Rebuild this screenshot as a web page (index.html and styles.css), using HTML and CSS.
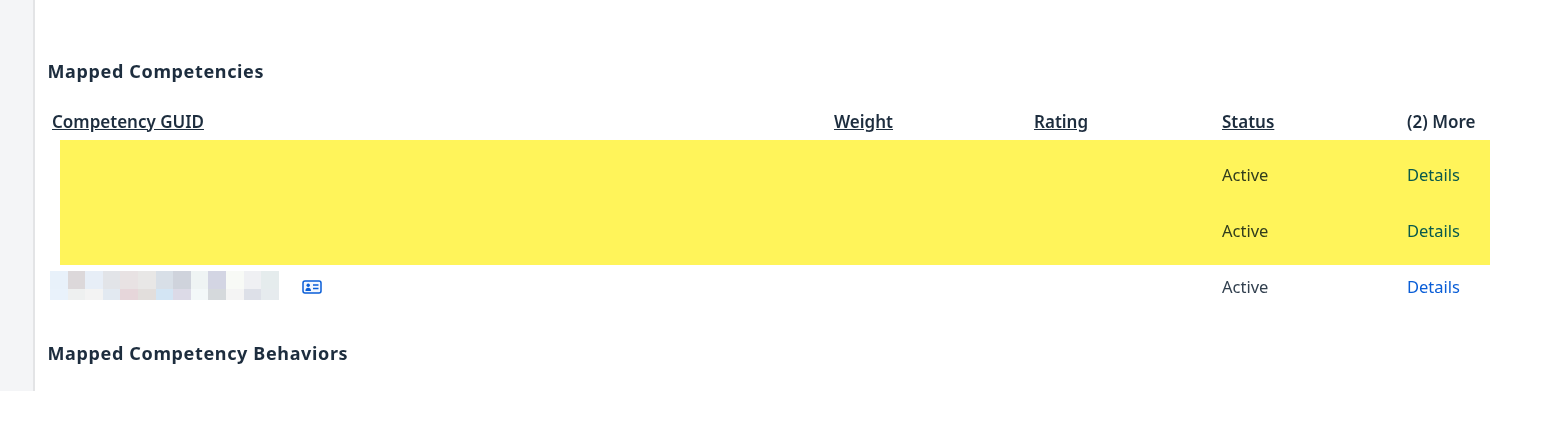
FILE: index.html
```html
<!DOCTYPE html>
<html lang="en">
<head>
    <meta charset="UTF-8">
    <title>Mapped Competencies</title>
    <link rel="stylesheet" href="styles.css">
</head>
<body>
    <div class="page">
        <aside class="sidebar"></aside>
        <main class="content">
            <h2 class="section-title first">Mapped Competencies</h2>
            <div class="table">
                <div class="row head">
                    <span class="sort">Competency GUID</span>
                    <span class="sort">Weight</span>
                    <span class="sort">Rating</span>
                    <span class="sort">Status</span>
                    <span>(2) More</span>
                </div>
                <div class="row tall">
                    <span></span><span></span><span></span>
                    <span>Active</span>
                    <a class="link">Details</a>
                </div>
                <div class="row tall">
                    <span></span><span></span><span></span>
                    <span>Active</span>
                    <a class="link">Details</a>
                </div>
                <div class="row last">
                    <div class="guid">
                        <div class="blur">
                            <i style="background:#e8f1fa"></i><i style="background:#dcd8da"></i><i style="background:#e7eef7"></i><i style="background:#e2e4e8"></i><i style="background:#e8e2e3"></i><i style="background:#e8e7e6"></i><i style="background:#d8dfe7"></i><i style="background:#cfd3dc"></i><i style="background:#eff4f4"></i><i style="background:#d3d5e3"></i><i style="background:#f8faf6"></i><i style="background:#eff0f3"></i><i style="background:#e5eced"></i>
                            <i style="background:#e9f2fb"></i><i style="background:#eef0f0"></i><i style="background:#f3f3f3"></i><i style="background:#e2e9f1"></i><i style="background:#e6d6da"></i><i style="background:#e2dedc"></i><i style="background:#d3e5f4"></i><i style="background:#dcdae7"></i><i style="background:#f3f8f9"></i><i style="background:#d5d9dc"></i><i style="background:#f4f4f4"></i><i style="background:#dde0e8"></i><i style="background:#e6ebee"></i>
                        </div>
                        <svg class="card-icon" width="20" height="14" viewBox="0 0 20 14">
                            <rect x="1" y="1" width="18" height="12" rx="2" fill="#f2f7fe" stroke="#0a5ed7" stroke-width="1.5"/>
                            <circle cx="6.200" cy="5.200" r="1.700" fill="#0a5ed7"/>
                            <path d="M3.400 11c0-2.200 1.200-3.200 2.800-3.200S9 8.800 9 11z" fill="#0a5ed7"/>
                            <path d="M11 5h5.500M11 8.500h5.500" stroke="#0a5ed7" stroke-width="1.500"/>
                        </svg>
                    </div>
                    <span></span><span></span>
                    <span>Active</span>
                    <a class="link">Details</a>
                </div>
                <div class="highlight"></div>
            </div>
            <h2 class="section-title second">Mapped Competency Behaviors</h2>
        </main>
    </div>
</body>
</html>
```

FILE: styles.css
```css
/* Page frame */
body {
    margin: 0;
    background-color: #fff;
    color: #32404f;
    font-family: "Noto Sans", Arial, sans-serif;
}

.page {
    display: flex;
    height: 391px;
}

.sidebar {
    width: 33px;
    flex-shrink: 0;
    background-color: #f4f5f7;
    border-right: 2px solid #e3e4e6;
}

.content {
    flex: 1;
    padding-left: 12.5px;
}

/* Headings */
.section-title {
    margin: 0;
    font-size: 18px;
    line-height: 24px;
    font-weight: 700;
    letter-spacing: 0.64px;
    color: #1d2d3e;
}

.section-title.first {
    padding-top: 59px;
}

.section-title.second {
    padding-top: 25px;
}

/* Table */
.table {
    position: relative;
    margin-top: 23px;
    padding-left: 4.5px;
    font-size: 16.5px;
}

.row {
    display: grid;
    grid-template-columns: 782px 200px 188px 185px 100px;
    align-items: center;
    box-sizing: border-box;
}

.head {
    height: 41px;
    padding-bottom: 11px;
    font-size: 17px;
    font-weight: 600;
    color: #1d2d3e;
}

.sort {
    text-decoration: underline;
}

.tall {
    height: 56px;
    padding-bottom: 2px;
}

.last {
    height: 57px;
    padding-bottom: 2px;
}

.link {
    color: #0a5ed7;
}

.guid {
    display: flex;
    align-items: center;
    gap: 23px;
    margin-left: -2px;
}

.blur {
    display: grid;
    grid-template-columns: repeat(13, 17.6px);
    grid-template-rows: 18px 11px;
    margin-bottom: 2px;
}

.card-icon {
    display: block;
}

/* Marker drawn over the first two rows */
.highlight {
    position: absolute;
    top: 34px;
    left: 12.5px;
    width: 1430px;
    height: 125px;
    background-color: #fff45a;
    mix-blend-mode: multiply;
}
```
